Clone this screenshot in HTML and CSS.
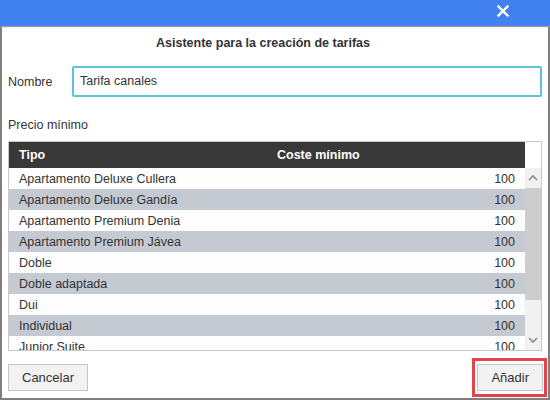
FILE: index.html
```html
<!DOCTYPE html>
<html>
<head>
<meta charset="utf-8">
<link rel="stylesheet" href="styles.css">
</head>
<body>
<div class="window">
  <div class="titlebar">
    <svg class="close" width="12" height="12" viewBox="0 0 12 12"><path d="M1.5 1.5 L10.5 10.5 M10.5 1.5 L1.5 10.5" stroke="#fff" stroke-width="2.4" stroke-linecap="square"/></svg>
  </div>
  <div class="body">
    <h1 class="heading">Asistente para la creación de tarifas</h1>
    <div class="field">
      <label class="field-label">Nombre</label>
      <div class="input">Tarifa canales</div>
    </div>
    <div class="section-label">Precio mínimo</div>
    <div class="grid">
      <div class="grid-main">
        <div class="grid-head">
          <div class="col-tipo">Tipo</div>
          <div class="col-coste">Coste mínimo</div>
        </div>
        <div class="rows">
          <div class="row"><span>Apartamento Deluxe Cullera</span><span>100</span></div>
          <div class="row alt"><span>Apartamento Deluxe Gandía</span><span>100</span></div>
          <div class="row"><span>Apartamento Premium Denia</span><span>100</span></div>
          <div class="row alt"><span>Apartamento Premium Jávea</span><span>100</span></div>
          <div class="row"><span>Doble</span><span>100</span></div>
          <div class="row alt"><span>Doble adaptada</span><span>100</span></div>
          <div class="row"><span>Dui</span><span>100</span></div>
          <div class="row alt"><span>Individual</span><span>100</span></div>
          <div class="row"><span>Junior Suite</span><span>100</span></div>
        </div>
      </div>
      <div class="scrollbar">
        <div class="sb-head"></div>
        <div class="sb-track">
          <svg class="arrow" width="10" height="6" viewBox="0 0 10 6"><path d="M1 5 L5 1 L9 5" fill="none" stroke="#888" stroke-width="1.6"/></svg>
          <div class="thumb"></div>
          <div class="sb-fill"></div>
          <svg class="arrow" width="10" height="6" viewBox="0 0 10 6"><path d="M1 1 L5 5 L9 1" fill="none" stroke="#888" stroke-width="1.6"/></svg>
        </div>
      </div>
    </div>
    <div class="footer">
      <button class="btn btn-cancel">Cancelar</button>
      <div class="highlight"><button class="btn">Añadir</button></div>
    </div>
  </div>
</div>
</body>
</html>
```
FILE: styles.css
```css
html, body { margin: 0; padding: 0; background: #fff; }
body { font-family: "Liberation Sans", Arial, sans-serif; font-size: 12px; color: #333; }
.window { width: 550px; height: 400px; display: flex; flex-direction: column; box-sizing: border-box; }
.titlebar { height: 26px; background: #4181f0; display: flex; justify-content: flex-end; align-items: center; padding-right: 41px; box-shadow: 0 1px 1px #9a9a9a; position: relative; z-index: 1; flex: none; }
.close { margin-top: -5px; }
.body { flex: 1; border: 2px solid #7f7f7f; border-top: none; display: flex; flex-direction: column; padding: 0 6px; }
.heading { margin: 9px 0 0; padding-right: 24px; font-size: 12.5px; font-weight: bold; text-align: center; color: #333; height: 16px; line-height: 16px; }
.field { display: flex; align-items: center; margin-top: 15px; }
.field-label { width: 64px; font-size: 12.5px; }
.input { flex: 1; height: 27px; border: 2px solid #5fc2dc; border-radius: 2px; box-sizing: content-box; line-height: 27px; padding-left: 6px; font-size: 12.5px; color: #333; }
.section-label { margin-top: 21px; font-size: 12.5px; line-height: 14px; }
.grid { margin-top: 9px; height: 208px; border: 1px solid #c8c8c8; display: flex; overflow: hidden; flex: none; }
.grid-main { flex: 1; display: flex; flex-direction: column; overflow: hidden; }
.grid-head { height: 26px; background: #383838; color: #fff; font-weight: bold; display: flex; align-items: center; font-size: 12.5px; flex: none; }
.col-tipo { width: 258px; padding-left: 10px; }
.col-coste { flex: 1; }
.rows { flex: 1; overflow: hidden; }
.row { height: 21px; display: flex; justify-content: space-between; align-items: center; padding: 0 10px; background: #fdfdfd; font-size: 12.5px; color: #333; }
.row.alt { background: #c5c9d2; }
.scrollbar { width: 16px; display: flex; flex-direction: column; background: #fff; }
.sb-head { height: 26px; flex: none; }
.sb-track { flex: 1; display: flex; flex-direction: column; align-items: center; background: #f1f1f1; }
.arrow { margin: 7px 0 7px; flex: none; }
.thumb { width: 16px; height: 112px; background: #cdcdcd; flex: none; }
.sb-fill { flex: 1; }
.footer { display: flex; justify-content: space-between; align-items: flex-start; margin-top: 7px; }
.btn { font-family: "Liberation Sans", Arial, sans-serif; font-size: 13px; color: #333; background: #f2f2f2; border: 1px solid #c6c6c6; height: 27px; padding: 0 13px; margin: 0; }
.btn-cancel { margin-top: 6px; }
.highlight { border: 3px solid #e2444a; padding: 3px 1px 3px 2px; margin-right: -5px; }
```
